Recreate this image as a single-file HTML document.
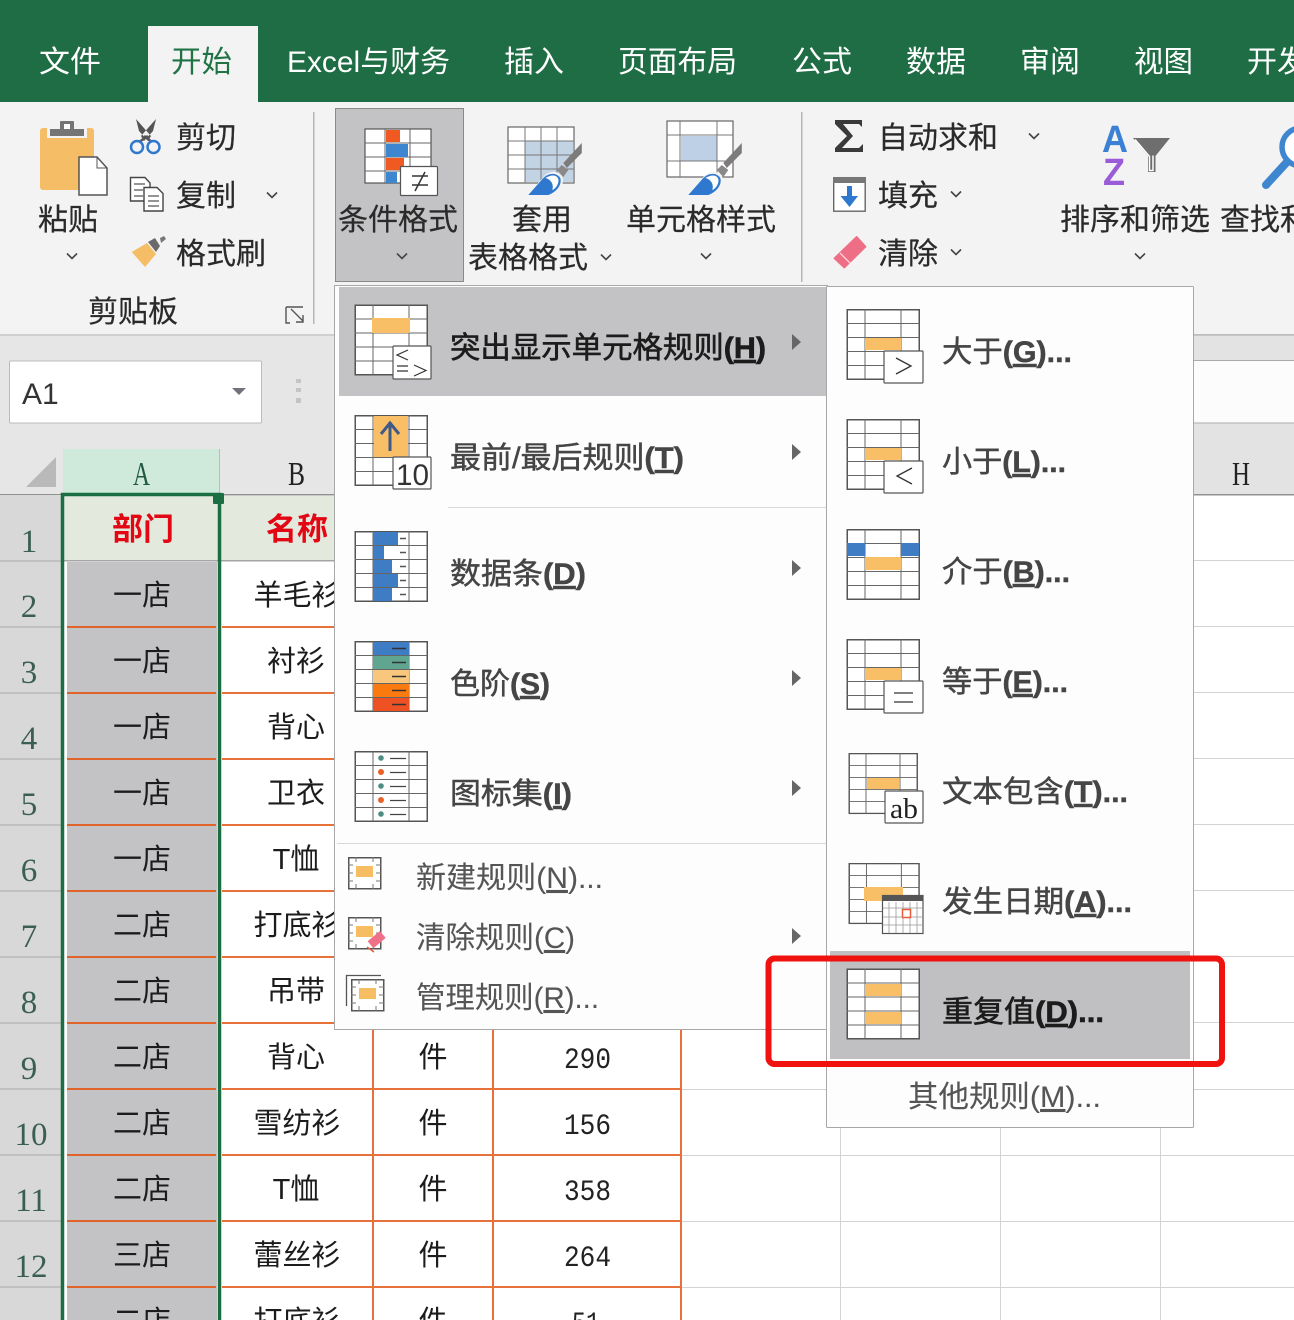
<!DOCTYPE html>
<html><head><meta charset="utf-8"><style>
html,body{margin:0;padding:0;background:#fff;width:1294px;height:1320px;overflow:hidden}
svg{display:block}
text{font-family:"Liberation Sans","Noto Sans CJK SC",sans-serif;font-size:30px;fill:#333}
.tab{fill:#fff}
.rb{fill:#2a2a2a;stroke:#2a2a2a;stroke-width:.2}
.m{fill:#454545;stroke:#454545;stroke-width:.45}
.d{fill:#1c1c1c;stroke:#1c1c1c;stroke-width:.6}
.l{fill:#555;stroke:#555;stroke-width:.1}
.b{font-weight:700}
.c{font-size:29px;fill:#1c1c1c;text-anchor:middle}
.n{font-family:"Liberation Serif",serif;font-size:33px;fill:#3a5f52;text-anchor:middle}
.h{font-family:"Liberation Serif",serif;font-size:34px;fill:#222}
.v{font-family:"Liberation Mono",monospace;font-size:30px;fill:#222}
</style></head><body>
<svg width="1294" height="1320" viewBox="0 0 1294 1320" xmlns="http://www.w3.org/2000/svg">
<defs>
<g id="gr"><rect x=".75" y=".75" width="72" height="69.5" fill="#fff" stroke="#555" stroke-width="1.5"/><path d="M18.500 0V70M54.500 0V70M0 14.500H73M0 28.500H73M0 42.500H73M0 56.500H73" stroke="#666" stroke-width="1" fill="none"/></g>
<g id="mg"><rect x=".75" y=".75" width="32" height="31" fill="#fff" stroke="#555" stroke-width="1.500"/><path d="M8 0V5M25 0V5M8 27V32M25 27V32M0 8H5M28 8H33M0 24H5M28 24H33M0 16H5M28 16H33" stroke="#777" stroke-width="1"/><rect x="8" y="9" width="17" height="11" fill="#f6bd62"/></g>
<path id="ch" d="M-5-2.500L0 2.500L5-2.500" fill="none" stroke="#444" stroke-width="1.600"/>
<path id="ar" d="M0-8L9 0L0 8Z" fill="#666"/>
<g id="br">
<path d="M-2 2L15-18C21-25 30-25 34-18C37-10 29-1 20 2Z" fill="#f3f3f3"/>
<path d="M53.500-52V-42L38.500-27L35-32Z" fill="#7e7b7b"/>
<path d="M28.500-25L33.500-30L40-25L35-18Z" fill="#8a8888"/>
<path d="M0 0L15-17C20-22 28-23 32-17C34-10 28-3 20 0Z" fill="#2f78d0"/>
<path d="M17-17C22-20 28-21 30-16C31-11 27-6 24-5C26-11 22-16 17-17Z" fill="#fff"/>
</g>
</defs>

<!-- base -->
<rect width="1294" height="1320" fill="#fff"/>
<rect width="1294" height="102" fill="#1f6d44"/>
<rect y="102" width="1294" height="233" fill="#f3f3f3"/>
<rect y="335" width="1294" height="160" fill="#e6e6e6"/>
<rect y="334" width="1294" height="2" fill="#cfcfcf"/>
<rect x="148" y="26" width="110" height="80" fill="#f3f3f3"/>

<!-- tabs -->
<text class="tab" x="39" y="72" textLength="62" lengthAdjust="spacingAndGlyphs">文件</text>
<text x="171" y="72" textLength="61" lengthAdjust="spacingAndGlyphs" style="fill:#217346">开始</text>
<text class="tab" x="287" y="72" textLength="163" lengthAdjust="spacingAndGlyphs">Excel与财务</text>
<text class="tab" x="504" y="72" textLength="60" lengthAdjust="spacingAndGlyphs">插入</text>
<text class="tab" x="618" y="72" textLength="119" lengthAdjust="spacingAndGlyphs">页面布局</text>
<text class="tab" x="792" y="72" textLength="60" lengthAdjust="spacingAndGlyphs">公式</text>
<text class="tab" x="906" y="72" textLength="60" lengthAdjust="spacingAndGlyphs">数据</text>
<text class="tab" x="1020" y="72" textLength="60" lengthAdjust="spacingAndGlyphs">审阅</text>
<text class="tab" x="1134" y="72" textLength="59" lengthAdjust="spacingAndGlyphs">视图</text>
<text class="tab" x="1247" y="72" textLength="60" lengthAdjust="spacingAndGlyphs">开发</text>

<!-- ribbon separators -->
<rect x="313" y="112" width="1.500" height="212" fill="#b5b5b5"/>
<rect x="801" y="112" width="1.500" height="170" fill="#b5b5b5"/>

<!-- paste -->
<rect x="40" y="128" width="54" height="62" rx="3" fill="#f5bd66"/>
<rect x="47" y="126" width="40" height="12" fill="#f3f3f3"/>
<rect x="50" y="129" width="34" height="7" fill="#757575"/>
<rect x="60" y="121" width="14" height="9" rx="1" fill="#757575"/><rect x="64" y="124" width="6" height="5" fill="#fff"/>
<path d="M79 157H97L107 168V195H79Z" fill="#fff" stroke="#555" stroke-width="1.500"/><path d="M97 157V168H107" fill="none" stroke="#555" stroke-width="1"/>
<text class="rb" x="38" y="230" textLength="60" lengthAdjust="spacingAndGlyphs">粘贴</text>
<use href="#ch" x="72" y="256"/>

<!-- scissors -->
<path d="M136 119L151 136L148 141L139 131ZM156 119L141 136L144 141L153 131Z" fill="#555"/>
<path d="M148 136L139 142M144 136L152 142" stroke="#555" stroke-width="2.500"/>
<circle cx="137" cy="147" r="6" fill="none" stroke="#2f78d0" stroke-width="2.500"/>
<circle cx="153.500" cy="147" r="6" fill="none" stroke="#2f78d0" stroke-width="2.500"/>
<text class="rb" x="176" y="148" textLength="60" lengthAdjust="spacingAndGlyphs">剪切</text>
<!-- copy -->
<path d="M130.500 177.500H145L150 183V201H130.500Z" fill="#fff" stroke="#444" stroke-width="1.400"/>
<path d="M134 184H145M134 190H143M134 196H143" stroke="#555" stroke-width="1.200"/>
<path d="M144 187.500H157L163 193.500V211H144Z" fill="#fff" stroke="#444" stroke-width="1.400"/>
<path d="M148 196H159M148 201H159M148 206H159" stroke="#555" stroke-width="1.200"/>
<text class="rb" x="176" y="206" textLength="60" lengthAdjust="spacingAndGlyphs">复制</text>
<use href="#ch" x="272" y="195"/>
<!-- brush -->
<path d="M131.700 252L147 243L156 254L145 267Z" fill="#f5bd66"/>
<path d="M148 242L155 238L160 246L156 252Z" fill="#6a6a6a"/><path d="M160 238L164 236L166 239L161 243Z" fill="#777"/>
<text class="rb" x="176" y="264" textLength="90" lengthAdjust="spacingAndGlyphs">格式刷</text>
<text class="rb" x="88" y="322" textLength="90" lengthAdjust="spacingAndGlyphs">剪贴板</text>
<path d="M286 307H303M286 307V323H290M291 309L303 321M303 315V322H296" fill="none" stroke="#555" stroke-width="1.400"/>

<!-- cond format button -->
<rect x="335.500" y="108.500" width="128" height="173" fill="#c3c2c4" stroke="#8a8a8a"/>
<rect x="365" y="129" width="66" height="54" fill="#fff" stroke="#555" stroke-width="1.200"/>
<path d="M385 129V183M410 129V183M365 143H431M365 157H431M365 171H431" stroke="#666" stroke-width="1"/>
<rect x="386" y="130" width="14" height="12" fill="#f05a22"/>
<rect x="386" y="144" width="22" height="13" fill="#3f86d0"/>
<rect x="386" y="158" width="18" height="12" fill="#f05a22"/>
<rect x="386" y="172" width="11" height="11" fill="#3f86d0"/>
<rect x="400.500" y="166.500" width="37" height="29" rx="1" fill="#fff" stroke="#555" stroke-width="1.200"/>
<path d="M412 176H428M412 185H428M425 172L415 191" stroke="#333" stroke-width="1.500"/>
<text class="rb" x="338" y="230" textLength="120" lengthAdjust="spacingAndGlyphs">条件格式</text>
<use href="#ch" x="402" y="256"/>

<!-- table format -->
<rect x="508" y="127" width="66" height="56" fill="#fff" stroke="#666" stroke-width="1.200"/>
<rect x="525" y="141" width="48" height="41" fill="#c2d3e4"/>
<path d="M525 127V183M541 127V183M557 127V183M508 141H574M508 155H574M508 169H574" stroke="#777" stroke-width="1"/>
<use href="#br" x="528.300" y="195"/>
<text class="rb" x="512" y="230" textLength="60" lengthAdjust="spacingAndGlyphs">套用</text>
<text class="rb" x="468" y="268" textLength="120" lengthAdjust="spacingAndGlyphs">表格格式</text>
<use href="#ch" x="606" y="257"/>

<!-- cell style -->
<rect x="667" y="121" width="66" height="56" fill="#fff" stroke="#666" stroke-width="1.200"/>
<rect x="681" y="136" width="36" height="25" fill="#bdd0e6"/>
<path d="M680 121V177M717 121V177M667 135H733M667 161H733" stroke="#777" stroke-width="1"/>
<use href="#br" x="688.300" y="195"/>
<text class="rb" x="626" y="230" textLength="150" lengthAdjust="spacingAndGlyphs">单元格样式</text>
<use href="#ch" x="706" y="256"/>

<!-- editing -->
<path d="M863 126V121H835V125L847 136L836 147V152H863V146" fill="none" stroke="#3a3a3a" stroke-width="0"/>
<path d="M835 120H862V127L859 124H843L853 136L842 148H859L863 144V152H835V148L847 136L835 124Z" fill="#3a3a3a"/>
<text class="rb" x="878" y="148" textLength="120" lengthAdjust="spacingAndGlyphs">自动求和</text>
<use href="#ch" x="1034" y="136"/>
<rect x="833.700" y="177.700" width="31.500" height="33.500" fill="#fff" stroke="#666" stroke-width="1.400"/>
<rect x="833" y="177" width="33" height="6" fill="#777"/>
<path d="M847 186H852V196H858L849.500 207L840.500 196H847Z" fill="#2f78d0"/>
<text class="rb" x="878" y="206" textLength="60" lengthAdjust="spacingAndGlyphs">填充</text>
<use href="#ch" x="956" y="194"/>
<path d="M856.700 236.700L865.700 246.700L844.300 267.700L834.300 258.300Z" fill="#ee6f85" stroke="#ee6f85" stroke-width="1.500" stroke-linejoin="round"/>
<path d="M840 253L850 263" stroke="#fbd5db" stroke-width="1.300"/>
<text class="rb" x="878" y="264" textLength="60" lengthAdjust="spacingAndGlyphs">清除</text>
<use href="#ch" x="956" y="252"/>

<text x="1102" y="152" textLength="26" lengthAdjust="spacingAndGlyphs" style="font-size:38px;font-weight:700;fill:#3c80d6">A</text>
<text x="1103" y="185" textLength="22" lengthAdjust="spacingAndGlyphs" style="font-size:38px;font-weight:700;fill:#9a5bd8">Z</text>
<path d="M1133 138H1170L1155.500 156V172H1148V156Z" fill="#6e6e6e"/>
<path d="M1135 139.500L1149.500 156.500V170.500H1153V155.500" fill="none" stroke="#fff" stroke-width="1.500"/>
<circle cx="1301" cy="147" r="19" fill="#fff" stroke="#3f86d0" stroke-width="5.500"/>
<path d="M1266 185L1287 162" stroke="#3f86d0" stroke-width="8" stroke-linecap="round"/>
<text class="rb" x="1060" y="230" textLength="150" lengthAdjust="spacingAndGlyphs">排序和筛选</text>
<text class="rb" x="1220" y="230" textLength="90" lengthAdjust="spacingAndGlyphs">查找和</text>
<use href="#ch" x="1140" y="256"/>

<!-- formula bar -->
<rect x="9.500" y="361" width="252" height="62" rx="1" fill="#fff" stroke="#bbb"/>
<text x="22" y="404" style="font-size:30px;fill:#333">A1</text>
<path d="M232 388H246L239 395Z" fill="#72727e"/>
<path d="M296 379H301V383H296ZM296 388H301V392H296ZM296 398H301V403H296Z" fill="#c4c4c4"/>
<rect x="1190" y="335" width="104" height="25" fill="#e3e3e3"/>
<rect x="1190" y="361" width="104" height="62" fill="#fcfcfd"/>
<path d="M1190 335H1294M1190 360.500H1294M1190 423H1294" stroke="#aaa" stroke-width="1"/>
<rect x="1190" y="424" width="104" height="70" fill="#e3e3e3"/>

<!-- headers -->
<path d="M26 487H56V457Z" fill="#b9b9b9"/>
<rect x="63" y="449" width="156" height="45" fill="#cfeadb"/>
<text class="h" x="133" y="485" textLength="17" lengthAdjust="spacingAndGlyphs" style="fill:#1f5a45">A</text>
<text class="h" x="288" y="485" textLength="17" lengthAdjust="spacingAndGlyphs">B</text>
<text class="h" x="1232" y="485" textLength="18" lengthAdjust="spacingAndGlyphs">H</text>
<rect x="219" y="449" width="1" height="45" fill="#bbb"/>
<rect y="494" width="1294" height="1.500" fill="#909090"/>

<!-- row headers -->
<rect y="495" width="61" height="825" fill="#d8d8d8"/>
<path d="M0 561H61M0 627H61M0 693H61M0 759H61M0 825H61M0 891H61M0 957H61M0 1023H61M0 1089H61M0 1155H61M0 1221H61M0 1287H61" stroke="#a9a9a9" stroke-width="1"/>
<g>
<text class="n" x="29" y="552">1</text><text class="n" x="29" y="617">2</text><text class="n" x="29" y="683">3</text><text class="n" x="29" y="749">4</text><text class="n" x="29" y="815">5</text><text class="n" x="29" y="881">6</text><text class="n" x="29" y="947">7</text><text class="n" x="29" y="1013">8</text><text class="n" x="29" y="1079">9</text><text class="n" x="31" y="1145">10</text><text class="n" x="31" y="1211">11</text><text class="n" x="31" y="1277">12</text>
</g>

<!-- grid right -->
<path d="M681 1089.500H1294M681 1155.500H1294M681 1221.500H1294M681 1287.500H1294M1190 560.500H1294M1190 626.500H1294M1190 692.500H1294M1190 758.500H1294M1190 824.500H1294M1190 890.500H1294M1190 956.500H1294M1190 1022.500H1294M840.500 1127V1320M1000.500 1127V1320M1160.500 1127V1320" stroke="#d3d3d3" stroke-width="1"/>

<!-- cells -->
<rect x="64" y="496" width="270" height="64" fill="#e3e9dc"/>
<rect x="64" y="560" width="270" height="1.500" fill="#a5a5a5"/>
<rect x="67" y="562" width="150" height="758" fill="#c3c2c4"/>
<path d="M67 627H216M67 693H216M67 759H216M67 825H216M67 891H216M67 957H216M67 1023H216M67 1089H216M67 1155H216M67 1221H216M67 1287H216" stroke="#e0642a" stroke-width="2"/>
<path d="M222 627H681M222 693H681M222 759H681M222 825H681M222 891H681M222 957H681M222 1023H681M222 1089H681M222 1155H681M222 1221H681M222 1287H681M373 627V1320M493 627V1320M681 627V1320" stroke="#e6713a" stroke-width="2"/>
<text x="112" y="540" textLength="62" lengthAdjust="spacingAndGlyphs" style="font-size:31px;font-weight:700;fill:#e30613">部门</text>
<text x="266" y="540" textLength="62" lengthAdjust="spacingAndGlyphs" style="font-size:31px;font-weight:700;fill:#e30613">名称</text>
<g>
<text class="c" x="142" y="605">一店</text><text class="c" x="142" y="671">一店</text><text class="c" x="142" y="737">一店</text><text class="c" x="142" y="803">一店</text><text class="c" x="142" y="869">一店</text><text class="c" x="142" y="935">二店</text><text class="c" x="142" y="1001">二店</text><text class="c" x="142" y="1067">二店</text><text class="c" x="142" y="1133">二店</text><text class="c" x="142" y="1199">二店</text><text class="c" x="142" y="1265">三店</text><text class="c" x="142" y="1331">二店</text>
<text class="c" x="297" y="605">羊毛衫</text><text class="c" x="296" y="671">衬衫</text><text class="c" x="296" y="737">背心</text><text class="c" x="296" y="803">卫衣</text><text class="c" x="296" y="869">T恤</text><text class="c" x="297" y="935">打底衫</text><text class="c" x="296" y="1001">吊带</text><text class="c" x="296" y="1067">背心</text><text class="c" x="297" y="1133">雪纺衫</text><text class="c" x="296" y="1199">T恤</text><text class="c" x="297" y="1265">蕾丝衫</text><text class="c" x="297" y="1331">打底衫</text>
<text class="c" x="433" y="1067">件</text><text class="c" x="433" y="1133">件</text><text class="c" x="433" y="1199">件</text><text class="c" x="433" y="1265">件</text><text class="c" x="433" y="1331">件</text>
<text class="v" x="564" y="1068" textLength="47" lengthAdjust="spacingAndGlyphs">290</text><text class="v" x="564" y="1134" textLength="47" lengthAdjust="spacingAndGlyphs">156</text><text class="v" x="564" y="1200" textLength="47" lengthAdjust="spacingAndGlyphs">358</text><text class="v" x="564" y="1266" textLength="47" lengthAdjust="spacingAndGlyphs">264</text><text class="v" x="572" y="1332" textLength="28" lengthAdjust="spacingAndGlyphs">51</text>
</g>
<!-- selection -->
<path d="M62.500 1320V494.500H219.500V1320" fill="none" stroke="#1b6e42" stroke-width="3.500"/>
<rect x="213" y="493" width="11" height="11" rx="1" fill="#1b6e42"/>

<!-- menu 1 -->
<rect x="334.500" y="285.500" width="493" height="744" fill="#fdfdfe" stroke="#a8a8a8"/>
<rect x="339" y="287" width="487" height="109" fill="#c3c2c4"/>
<path d="M448 507.500H826M337 843.500H826" stroke="#d8d8d8" stroke-width="1"/>

<use href="#gr" x="354.500" y="304.500"/>
<rect x="372" y="318" width="38" height="15" fill="#f8bf66"/>
<rect x="393" y="346" width="38" height="33" rx="1" fill="#fff" stroke="#555" stroke-width="1.200"/>
<path d="M408 350L397 355L408 360M397 366H408M397 371H408M414 365L426 370.500L414 376" fill="none" stroke="#333" stroke-width="1.200"/>
<text class="d" x="450" y="358" textLength="316" lengthAdjust="spacingAndGlyphs">突出显示单元格规则<tspan class="b">(<tspan text-decoration="underline">H</tspan>)</tspan></text>
<use href="#ar" x="792" y="342"/>

<use href="#gr" x="354.500" y="415"/>
<rect x="374" y="416" width="34" height="41" fill="#f8bf66"/>
<path d="M390 451V422M381 434L390 423L399 434" fill="none" stroke="#3f5a87" stroke-width="3"/>
<rect x="393" y="457" width="38" height="32" rx="1" fill="#fff" stroke="#555" stroke-width="1.200"/>
<text x="396" y="485" textLength="33" lengthAdjust="spacingAndGlyphs" style="font-size:30px;fill:#333">10</text>
<text class="m" x="450" y="468" textLength="234" lengthAdjust="spacingAndGlyphs">最前/最后规则<tspan class="b">(<tspan text-decoration="underline">T</tspan>)</tspan></text>
<use href="#ar" x="792" y="452"/>

<use href="#gr" x="354.500" y="531"/>
<path d="M373 532h25v13h-25zM373 546h11v13h-11zM373 560h19v13h-19zM373 574h25v13h-25zM373 588h19v13h-19z" fill="#3e7cc4"/>
<path d="M400 538.500h6M400 552.500h6M400 566.500h6M400 580.500h6M400 594.500h6" stroke="#555" stroke-width="1.500"/>
<text class="m" x="450" y="584" textLength="136" lengthAdjust="spacingAndGlyphs">数据条<tspan class="b">(<tspan text-decoration="underline">D</tspan>)</tspan></text>
<use href="#ar" x="792" y="568"/>

<use href="#gr" x="354.500" y="641"/>
<rect x="373" y="642" width="36" height="13" fill="#3e7cc4"/>
<rect x="373" y="656" width="36" height="13" fill="#5fa58f"/>
<rect x="373" y="670" width="36" height="13" fill="#f8c67c"/>
<rect x="373" y="684" width="36" height="13" fill="#fb7a10"/>
<rect x="373" y="698" width="36" height="13" fill="#ee5224"/>
<path d="M392 648.500h14M392 662.500h14M392 676.500h14M392 690.500h14M392 704.500h14" stroke="#333" stroke-width="1.500"/>
<text class="m" x="450" y="694" textLength="100" lengthAdjust="spacingAndGlyphs">色阶<tspan class="b">(<tspan text-decoration="underline">S</tspan>)</tspan></text>
<use href="#ar" x="792" y="678"/>

<use href="#gr" x="354.500" y="751"/>
<circle cx="381" cy="758" r="2.800" fill="#4f8d84"/><circle cx="381" cy="772" r="3" fill="#e8622a"/><circle cx="381" cy="786" r="2.800" fill="#4f8d84"/><circle cx="381" cy="800" r="3" fill="#e8622a"/><circle cx="381" cy="814" r="2.800" fill="#4f8d84"/>
<path d="M390 758.500h16M390 772.500h16M390 786.500h16M390 800.500h16M390 814.500h16" stroke="#444" stroke-width="1.200"/>
<text class="m" x="450" y="804" textLength="122" lengthAdjust="spacingAndGlyphs">图标集<tspan class="b">(<tspan text-decoration="underline">I</tspan>)</tspan></text>
<use href="#ar" x="792" y="788"/>

<use href="#mg" x="348" y="857"/>
<text class="l" x="416" y="888" textLength="187" lengthAdjust="spacingAndGlyphs">新建规则(<tspan text-decoration="underline">N</tspan>)...</text>
<use href="#mg" x="348" y="917"/>
<rect x="369" y="935" width="16" height="9" transform="rotate(-40 377 940)" fill="#f0708a"/>
<path d="M367 947L374 952" stroke="#e85a3a" stroke-width="1.500"/>
<text class="l" x="416" y="948" textLength="159" lengthAdjust="spacingAndGlyphs">清除规则(<tspan text-decoration="underline">C</tspan>)</text>
<path d="M346.500 1006V975.500H381" fill="none" stroke="#555" stroke-width="1.300"/>
<use href="#mg" x="351" y="979"/>
<text class="l" x="416" y="1008" textLength="183" lengthAdjust="spacingAndGlyphs">管理规则(<tspan text-decoration="underline">R</tspan>)...</text>
<use href="#ar" x="792" y="936"/>

<!-- menu 2 -->
<rect x="826.500" y="286.500" width="367" height="841" rx="1" fill="#fdfdfe" stroke="#a8a8a8"/>
<rect x="830" y="951" width="360" height="108" fill="#c0bfc1"/>

<use href="#gr" x="846.500" y="309"/>
<rect x="865" y="338" width="36" height="12" fill="#f8bf66"/>
<rect x="884" y="351" width="39" height="32" rx="1" fill="#fff" stroke="#555" stroke-width="1.200"/>
<path d="M896 358L911 366L896 374" fill="none" stroke="#333" stroke-width="1.300"/>
<text class="m" x="942" y="362" textLength="130" lengthAdjust="spacingAndGlyphs">大于<tspan class="b">(<tspan text-decoration="underline">G</tspan>)...</tspan></text>

<use href="#gr" x="846.500" y="419"/>
<rect x="865" y="448" width="36" height="12" fill="#f8bf66"/>
<rect x="884" y="461" width="39" height="32" rx="1" fill="#fff" stroke="#555" stroke-width="1.200"/>
<path d="M912 468L897 476L912 484" fill="none" stroke="#333" stroke-width="1.300"/>
<text class="m" x="942" y="472" textLength="124" lengthAdjust="spacingAndGlyphs">小于<tspan class="b">(<tspan text-decoration="underline">L</tspan>)...</tspan></text>

<use href="#gr" x="846.500" y="529"/>
<rect x="847" y="543" width="18" height="13" fill="#3e7cc4"/><rect x="901" y="543" width="18" height="13" fill="#3e7cc4"/>
<rect x="865" y="557" width="36" height="13" fill="#f8bf66"/>
<text class="m" x="942" y="582" textLength="128" lengthAdjust="spacingAndGlyphs">介于<tspan class="b">(<tspan text-decoration="underline">B</tspan>)...</tspan></text>

<use href="#gr" x="846.500" y="639"/>
<rect x="865" y="668" width="36" height="12" fill="#f8bf66"/>
<rect x="884" y="681" width="39" height="32" rx="1" fill="#fff" stroke="#555" stroke-width="1.200"/>
<path d="M894 693H913M894 702H913" stroke="#333" stroke-width="1.300"/>
<text class="m" x="942" y="692" textLength="126" lengthAdjust="spacingAndGlyphs">等于<tspan class="b">(<tspan text-decoration="underline">E</tspan>)...</tspan></text>

<g transform="translate(848.500 753) scale(.945 .86)"><use href="#gr"/></g>
<rect x="867" y="778" width="32" height="11" fill="#f8bf66"/>
<rect x="885" y="791" width="38" height="32" rx="1" fill="#fff" stroke="#555" stroke-width="1.200"/>
<text x="890" y="818" textLength="28" lengthAdjust="spacingAndGlyphs" style="font-family:'Liberation Serif',serif;font-size:28px;fill:#222">ab</text>
<text class="m" x="942" y="802" textLength="186" lengthAdjust="spacingAndGlyphs">文本包含<tspan class="b">(<tspan text-decoration="underline">T</tspan>)...</tspan></text>

<g transform="translate(848.500 863) scale(.97 .86)"><use href="#gr"/></g>
<rect x="864" y="887" width="39" height="14" fill="#f8bf66"/>
<rect x="882.500" y="895.500" width="40.500" height="38" fill="#fff" stroke="#555" stroke-width="1.200"/>
<rect x="882" y="895" width="41" height="6" fill="#555"/>
<path d="M889 902V933M896 902V933M903 902V933M910 902V933M917 902V933M883 908H923M883 917H923M883 925H923" stroke="#999" stroke-width=".8"/>
<rect x="902.500" y="909.500" width="8" height="8" fill="#fff" stroke="#e85a3a" stroke-width="1.500"/>
<text class="m" x="942" y="912" textLength="190" lengthAdjust="spacingAndGlyphs">发生日期<tspan class="b">(<tspan text-decoration="underline">A</tspan>)...</tspan></text>

<use href="#gr" x="846.500" y="968.500"/>
<rect x="865" y="984" width="36" height="12" fill="#f8bf66"/><rect x="865" y="1012" width="36" height="12" fill="#f8bf66"/>
<text class="d" x="942" y="1022" textLength="162" lengthAdjust="spacingAndGlyphs">重复值<tspan class="b">(<tspan text-decoration="underline">D</tspan>)...</tspan></text>

<text class="l" x="908" y="1107" textLength="193" lengthAdjust="spacingAndGlyphs">其他规则(<tspan text-decoration="underline">M</tspan>)...</text>

<!-- red box -->
<rect x="768.500" y="958.500" width="453.500" height="105.500" rx="6" fill="none" stroke="#f0120f" stroke-width="6"/>
</svg>
</body></html>
